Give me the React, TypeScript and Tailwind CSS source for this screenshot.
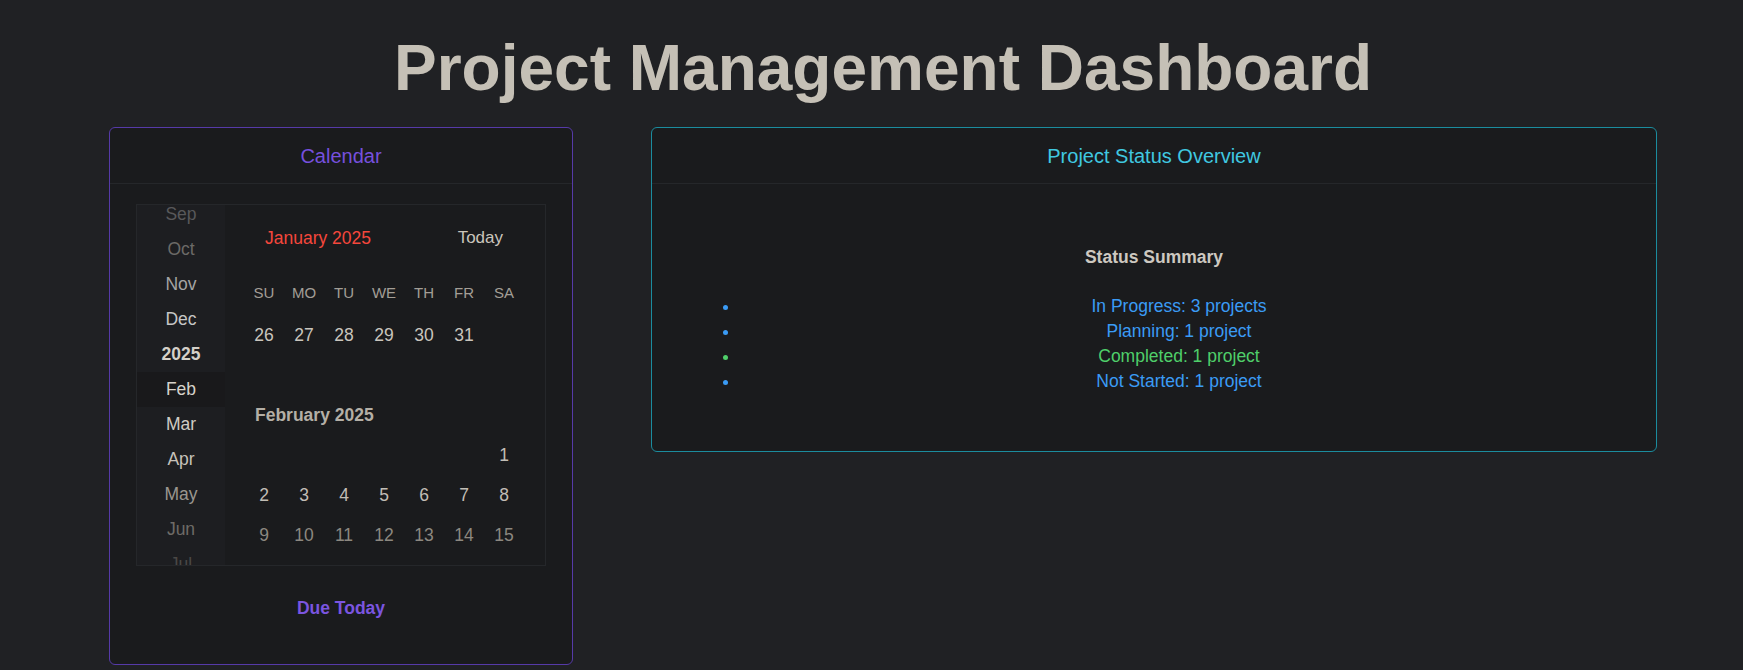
const months = [
  { label: 'Sep', cls: 'text-[#58585a]' },
  { label: 'Oct', cls: 'text-[#6c6a67]' },
  { label: 'Nov', cls: 'text-[#a4a4a4]' },
  { label: 'Dec', cls: 'text-[#c6c6c6]' },
  { label: '2025', cls: 'text-[#d4d0c8] font-bold' },
  { label: 'Feb', cls: 'text-[#d6d2ca] bg-[#19191b]' },
  { label: 'Mar', cls: 'text-[#d0ccc4]' },
  { label: 'Apr', cls: 'text-[#c6c2ba]' },
  { label: 'May', cls: 'text-[#9a968f]' },
  { label: 'Jun', cls: 'text-[#6e6b67]' },
  { label: 'Jul', cls: 'text-[#4a4846]' },
];

const weekdays = ['SU', 'MO', 'TU', 'WE', 'TH', 'FR', 'SA'];

const statusItems = [
  { label: 'In Progress: 3 projects', cls: 'text-[#3a9bf5]' },
  { label: 'Planning: 1 project', cls: 'text-[#3a9bf5]' },
  { label: 'Completed: 1 project', cls: 'text-[#4fcf6a]' },
  { label: 'Not Started: 1 project', cls: 'text-[#3a9bf5]' },
];

function DayRow({ days, cls }: { days: (number | null)[]; cls: string }) {
  return (
    <div className={`grid h-[40px] grid-cols-7 items-center text-center text-[17.5px] ${cls}`}>
      {days.map((d, i) => (
        <span key={i}>{d ?? ''}</span>
      ))}
    </div>
  );
}

function Calendar() {
  return (
    <div className="flex h-[362px] overflow-hidden border border-[#25272a] bg-[#1a1b1d]">
      {/* month / year scroller */}
      <div className="w-[88px] shrink-0 overflow-hidden bg-[#1d1e21]">
        <div className="-mt-[8px]">
          {months.map((m) => (
            <div key={m.label} className={`flex h-[35px] items-center justify-center text-[17.5px] ${m.cls}`}>
              {m.label}
            </div>
          ))}
        </div>
      </div>

      <div className="flex-1 pl-[19px] pr-[21px]">
        <div className="mt-[13px] flex h-[40px] items-center justify-between px-[21px]">
          <span className="text-[17.5px] text-[#f5473c]">January 2025</span>
          <span className="text-[17px] text-[#cac5bc]">Today</span>
        </div>
        <div className="mt-[15px] grid h-[40px] grid-cols-7 items-center text-center text-[15px] text-[#a39e96]">
          {weekdays.map((w) => (
            <span key={w}>{w}</span>
          ))}
        </div>
        <div className="mt-[2px]">
          <DayRow days={[26, 27, 28, 29, 30, 31, null]} cls="text-[#c9c5bd]" />
        </div>
        <div className="mt-[40px] flex h-[40px] items-center pl-[11px] text-[17.5px] font-bold text-[#b4afa6]">
          February 2025
        </div>
        <DayRow days={[null, null, null, null, null, null, 1]} cls="text-[#c2beb6]" />
        <DayRow days={[2, 3, 4, 5, 6, 7, 8]} cls="text-[#c2beb6]" />
        <DayRow days={[9, 10, 11, 12, 13, 14, 15]} cls="text-[#8c8880]" />
      </div>
    </div>
  );
}

export default function App() {
  return (
    <div className="min-h-screen bg-[#202124] pl-[109px] pr-[86px] pt-[31px] font-['Liberation_Sans',Arial,sans-serif]">
      <h1 className="h-[74px] text-center text-[64px] font-bold leading-[74px] text-[#c5c0b6]">
        Project Management Dashboard
      </h1>

      <div className="mt-[22px] flex items-start gap-[78px]">
        {/* Calendar card */}
        <div className="w-[464px] shrink-0 overflow-hidden rounded-md border border-[#563aa8] bg-[#1a1b1d]">
          <div className="flex h-[56px] items-center justify-center border-b border-[#25272a] text-[20px] text-[#7650dd]">
            Calendar
          </div>
          <div className="px-[26px] pt-[20px] pb-[44px]">
            <Calendar />
            <div className="mt-[30px] h-[24px] text-center text-[17.5px] font-bold leading-[24px] text-[#7b55e0]">
              Due Today
            </div>
          </div>
        </div>

        {/* Project status card */}
        <div className="flex-1 overflow-hidden rounded-md border border-[#1b8c9e] bg-[#1a1b1d]">
          <div className="flex h-[56px] items-center justify-center border-b border-[#25272a] text-[20px] text-[#40c8e0]">
            Project Status Overview
          </div>
          <div className="px-[32px] pt-[61px] pb-[57px]">
            <h3 className="h-[24px] text-center text-[17.5px] font-bold leading-[24px] text-[#cdc8c0]">
              Status Summary
            </h3>
            <ul className="mt-[25px] list-disc pl-[56px] pr-[6px] text-center text-[17.5px] leading-[25px]">
              {statusItems.map((s) => (
                <li key={s.label} className={s.cls}>
                  {s.label}
                </li>
              ))}
            </ul>
          </div>
        </div>
      </div>
    </div>
  );
}
